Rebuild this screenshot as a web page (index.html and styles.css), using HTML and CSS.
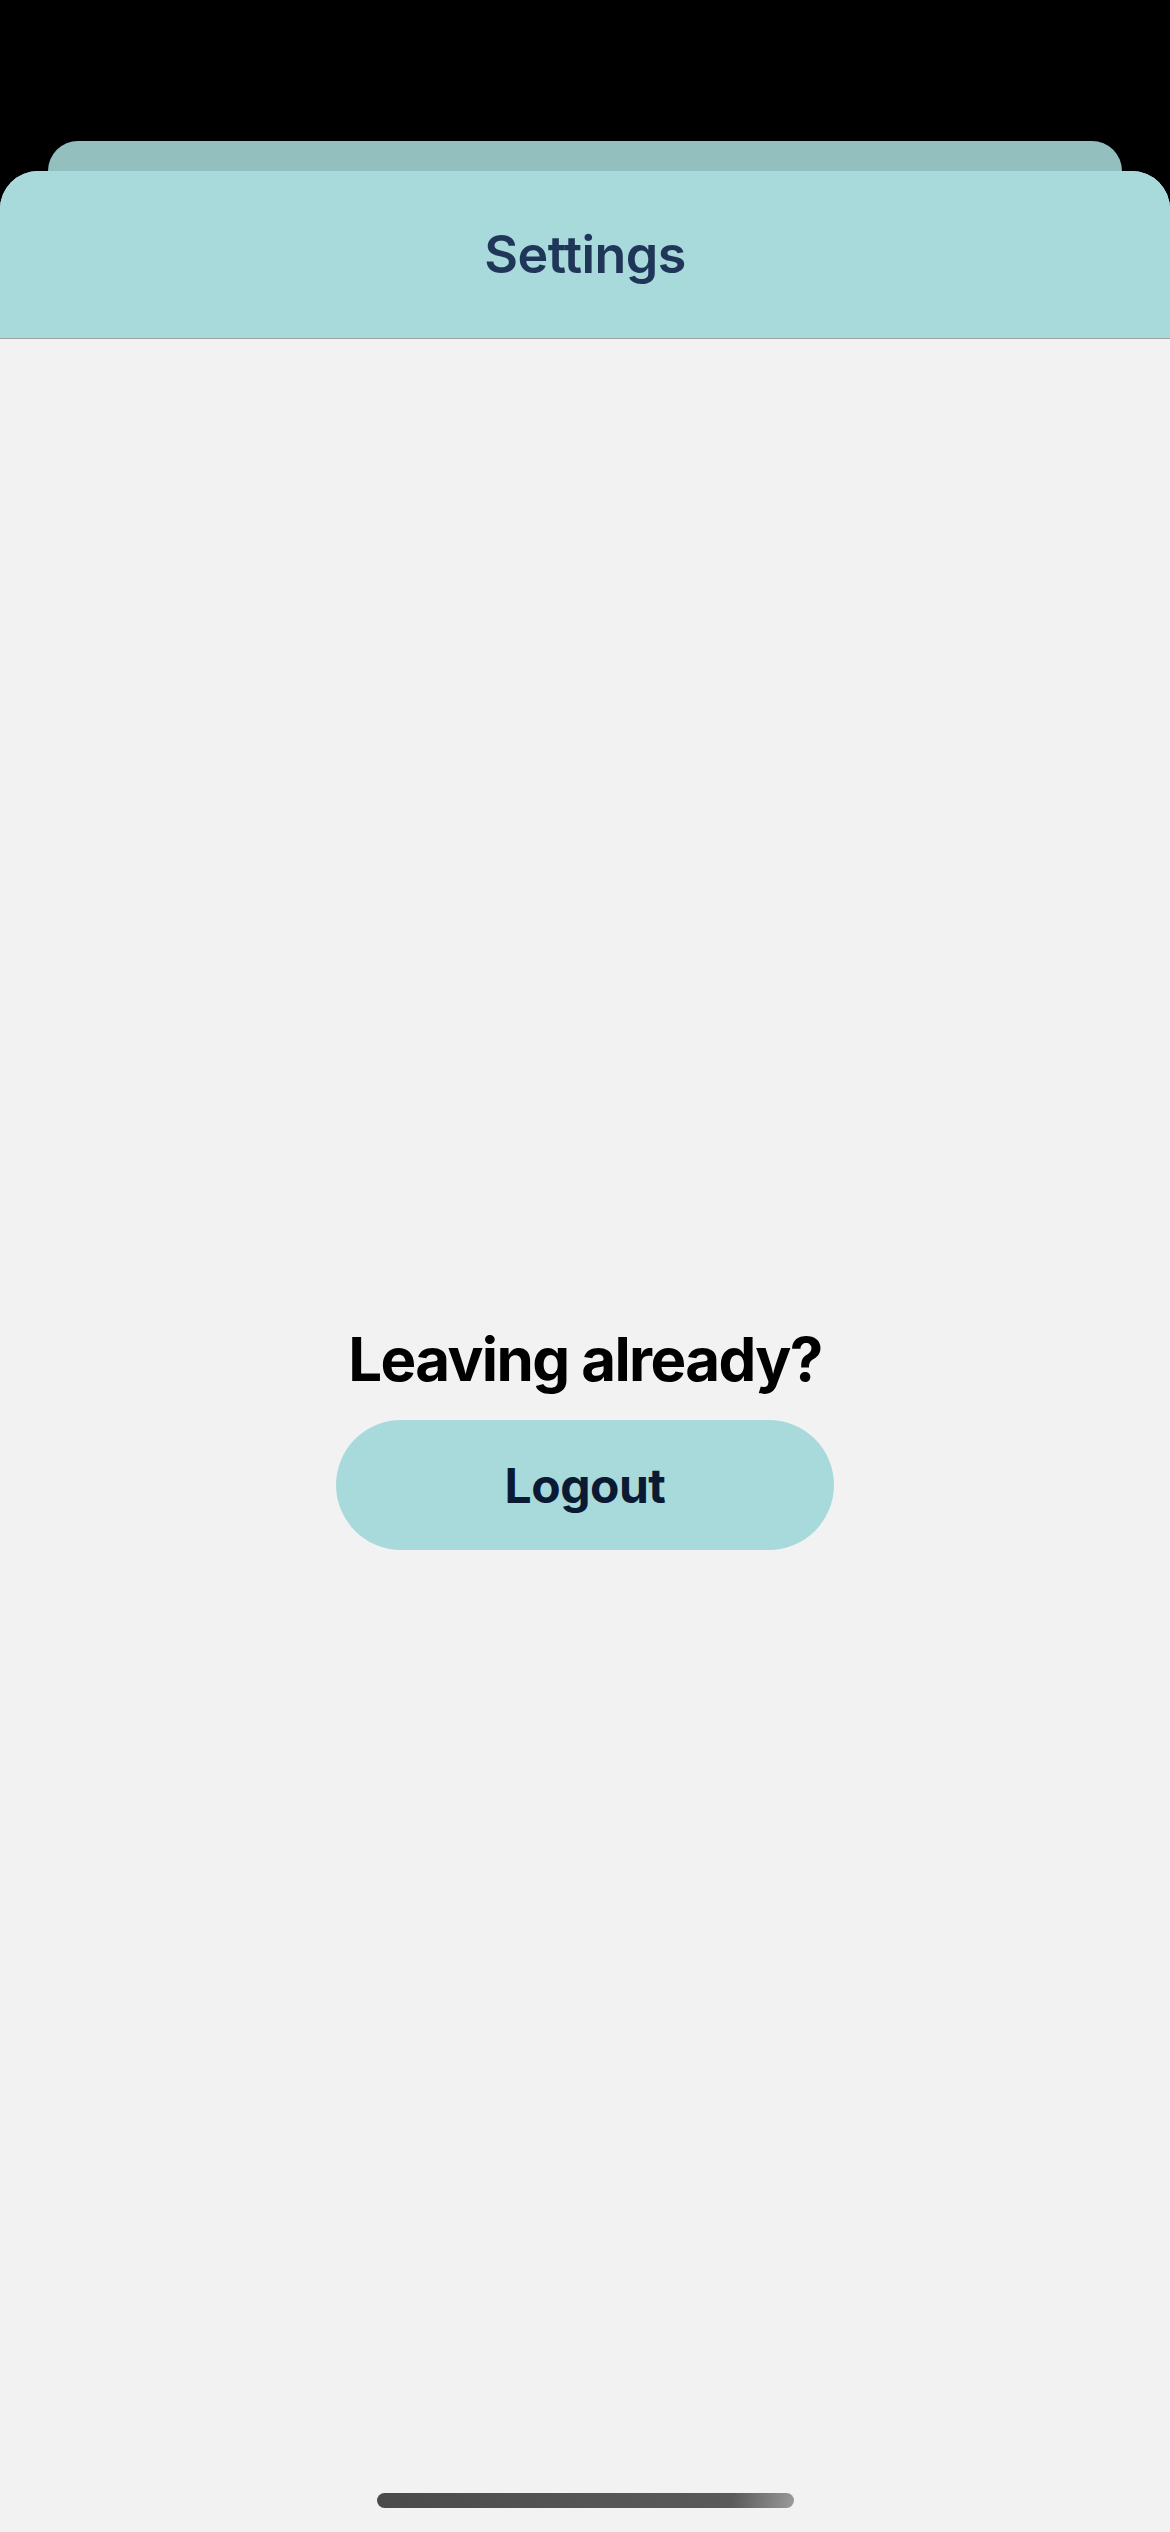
FILE: index.html
```html
<!DOCTYPE html>
<html lang="en">
<head>
<meta charset="utf-8">
<title>Settings</title>
<link rel="stylesheet" href="styles.css">
</head>
<body>
<div class="screen">
  <div class="back-card"></div>
  <div class="sheet">
    <header class="sheet-header">
      <h1 class="title">Settings</h1>
    </header>
    <main class="content">
      <h2 class="prompt">Leaving already?</h2>
      <button class="logout" type="button">Logout</button>
    </main>
    <div class="home-indicator"></div>
  </div>
</div>
</body>
</html>
```

FILE: styles.css
```css
* { box-sizing: border-box; }
html, body {
  margin: 0;
  padding: 0;
  background: #000;
  font-family: Inter, "Noto Sans", "Liberation Sans", sans-serif;
}
.screen {
  width: 1170px;
  height: 2532px;
  display: flex;
  flex-direction: column;
  padding-top: 141px;
  background: #000;
  overflow: hidden;
}
.back-card {
  height: 30px;
  margin: 0 48px;
  background: #93bfbf;
  border-radius: 30px 30px 0 0;
  flex: none;
}
.sheet {
  position: relative;
  flex: 1;
  display: flex;
  flex-direction: column;
  background: #f2f2f2;
  border-radius: 38px 38px 0 0;
  overflow: hidden;
}
.sheet-header {
  height: 168px;
  flex: none;
  background: #a8dadb;
  border-bottom: 1px solid #a3a3a3;
  display: flex;
  align-items: center;
  justify-content: center;
}
.title {
  margin: 0;
  font-size: 52px;
  font-weight: 600;
  color: #1f3658;
  letter-spacing: -0.6px;
}
.content {
  flex: 1;
  display: flex;
  flex-direction: column;
  align-items: center;
  justify-content: center;
  padding-top: 2px;
}
.prompt {
  margin: 0 0 25px;
  font-size: 60px;
  line-height: 72px;
  font-weight: 700;
  color: #000;
  letter-spacing: -1.6px;
}
.logout {
  width: 498px;
  height: 130px;
  border: none;
  border-radius: 65px;
  background: #a8dadb;
  color: #0b1a33;
  font-family: inherit;
  font-size: 48px;
  font-weight: 700;
  letter-spacing: -0.5px;
  padding: 0;
}
.home-indicator {
  position: absolute;
  left: 377px;
  bottom: 24px;
  width: 417px;
  height: 15px;
  border-radius: 8px;
  background: linear-gradient(100deg, #4a4a4a 0%, #555 50%, #5a5a5a 85%, #9a9a9a 100%);
}
```
